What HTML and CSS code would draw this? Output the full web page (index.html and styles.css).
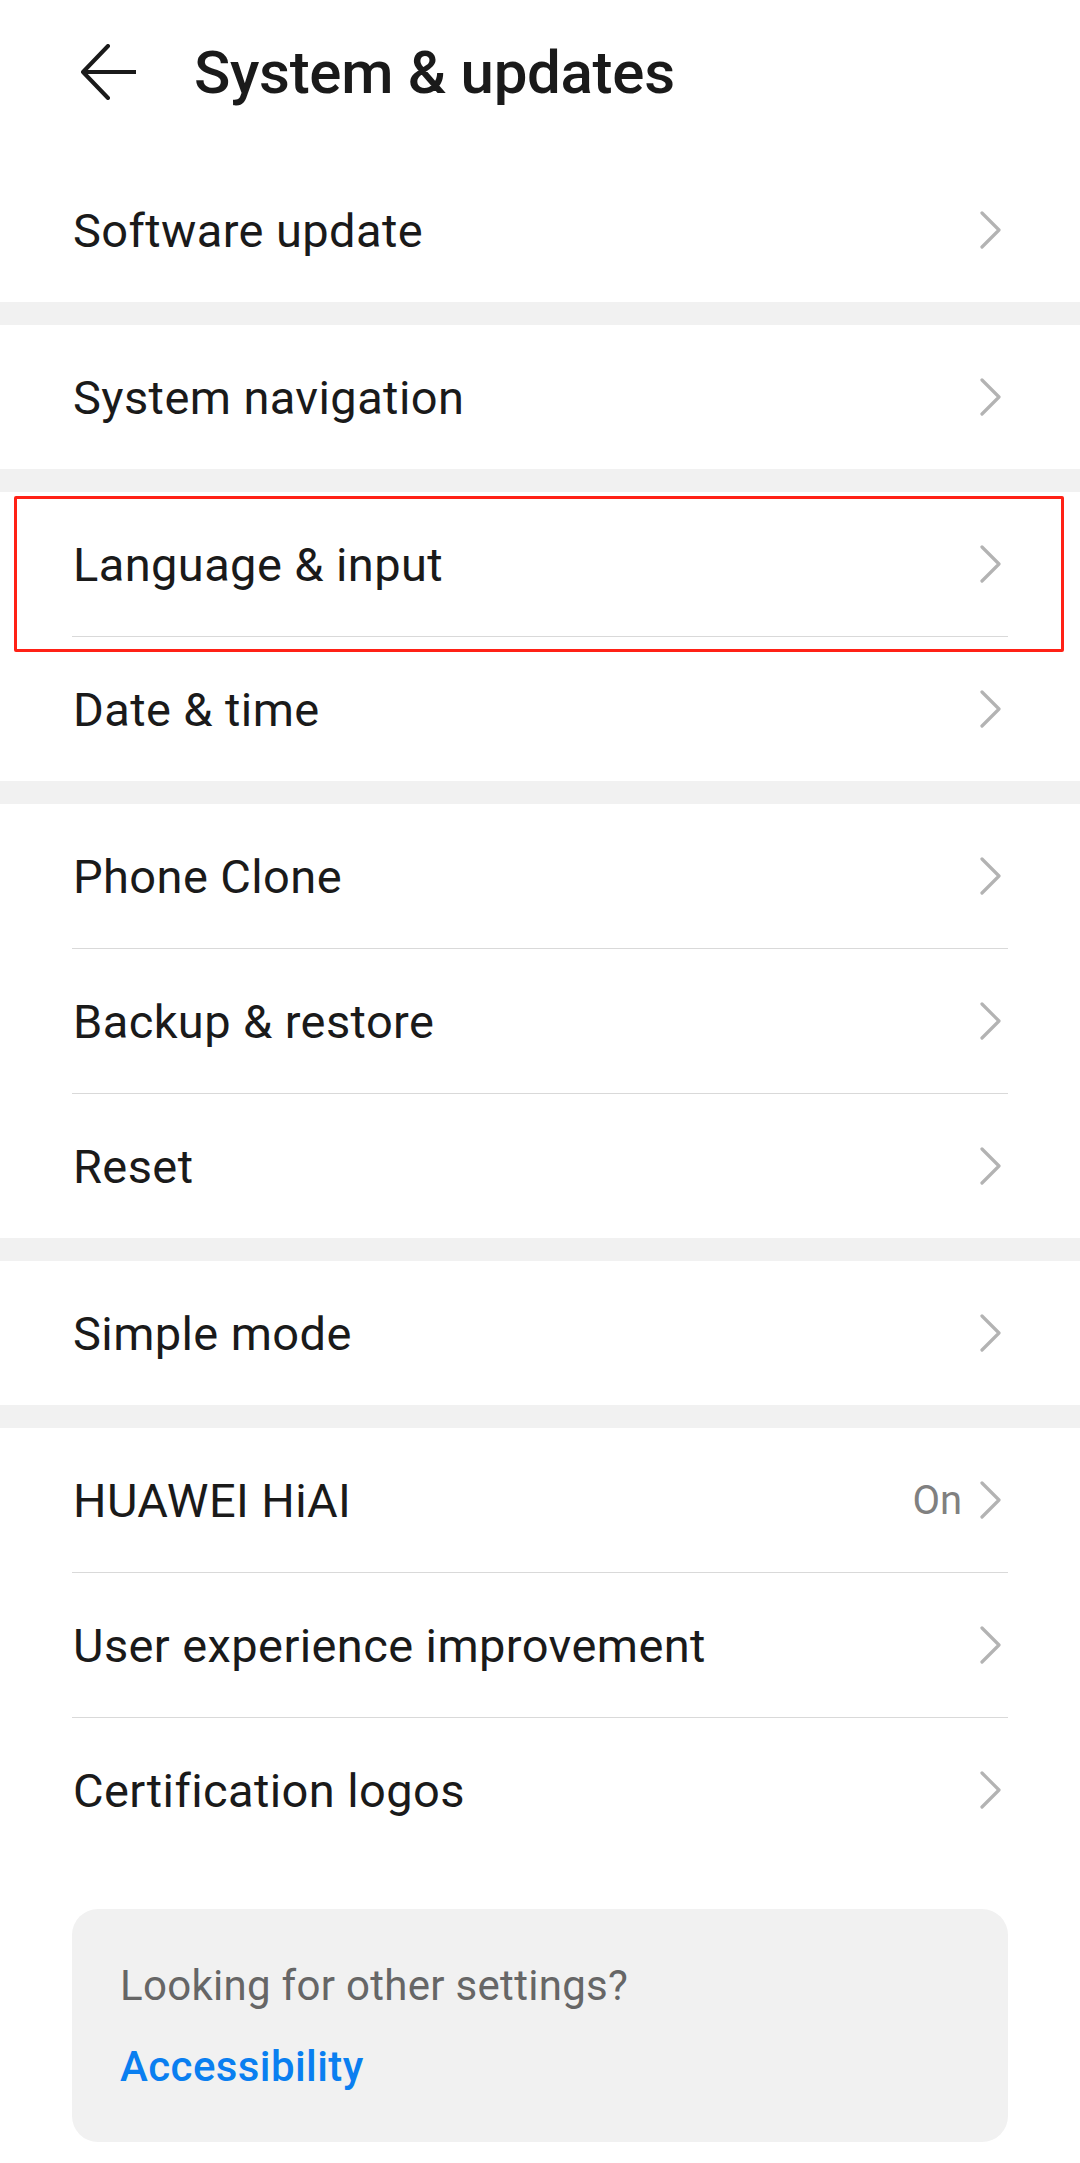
FILE: index.html
```html
<!DOCTYPE html>
<html lang="en">
<head>
  <meta charset="UTF-8" />
  <title>System &amp; updates</title>
  <link rel="stylesheet" href="styles.css">
</head>
<body>
  <div class="header">
    <svg class="back" width="56" height="56" viewBox="0 0 56 56">
      <path d="M28 2 L3 28 L28 54 M3 28 H56" fill="none" stroke="#1a1a1a" stroke-width="4" stroke-linecap="round" stroke-linejoin="round"/>
    </svg>
    <h1>System &amp; updates</h1>
  </div>

  <div class="group">
    <div class="row"><span class="label">Software update</span><span class="chev"></span></div>
  </div>
  <div class="gap"></div>

  <div class="group">
    <div class="row"><span class="label">System navigation</span><span class="chev"></span></div>
  </div>
  <div class="gap"></div>

  <div class="group marked">
    <div class="row"><span class="label">Language &amp; input</span><span class="chev"></span></div>
    <div class="divider"></div>
    <div class="row"><span class="label">Date &amp; time</span><span class="chev"></span></div>
    <div class="highlight"></div>
  </div>
  <div class="gap"></div>

  <div class="group">
    <div class="row"><span class="label">Phone Clone</span><span class="chev"></span></div>
    <div class="divider"></div>
    <div class="row"><span class="label">Backup &amp; restore</span><span class="chev"></span></div>
    <div class="divider"></div>
    <div class="row"><span class="label">Reset</span><span class="chev"></span></div>
  </div>
  <div class="gap"></div>

  <div class="group">
    <div class="row"><span class="label">Simple mode</span><span class="chev"></span></div>
  </div>
  <div class="gap"></div>

  <div class="group">
    <div class="row"><span class="label">HUAWEI HiAI</span><span class="value">On</span><span class="chev"></span></div>
    <div class="divider"></div>
    <div class="row"><span class="label">User experience improvement</span><span class="chev"></span></div>
    <div class="divider"></div>
    <div class="row"><span class="label">Certification logos</span><span class="chev"></span></div>
  </div>

  <div class="hint">
    <p class="hint-text">Looking for other settings?</p>
    <a class="hint-link" href="#">Accessibility</a>
  </div>

  <script>
    // same chevron icon for every row
    var chev = '<svg width="28" height="40" viewBox="0 0 28 40"><path d="M2 3 L19 20 L2 37" fill="none" stroke="#b3b3b3" stroke-width="3.2" stroke-linecap="round" stroke-linejoin="round"/></svg>';
    document.querySelectorAll('.chev').forEach(function (el) {
      el.innerHTML = chev;
    });
  </script>
</body>
</html>
```

FILE: styles.css
```css
body {
  margin: 0;
  background-color: #fff;
  font-family: Roboto, "Noto Sans", Arial, sans-serif;
  color: #1a1a1a;
}
.header {
  height: 158px;
  display: flex;
  align-items: center;
  padding-left: 80px;
  padding-bottom: 14px;
  box-sizing: border-box;
}
.back {
  flex: none;
}
.header h1 {
  margin: 0 0 0 58px;
  font-size: 60px;
  font-weight: 500;
  letter-spacing: -0.3px;
}
.group {
  background-color: #fff;
}
.gap {
  height: 23px;
  background-color: #f1f1f1;
}
.marked {
  position: relative;
}
.row {
  height: 144px;
  display: flex;
  align-items: center;
  padding: 0 72px;
}
.label {
  flex: 1;
  font-size: 47px;
  letter-spacing: 0.4px;
  margin-left: 1px;
}
.value {
  font-size: 40px;
  color: #808080;
  margin-right: 18px;
}
.chev {
  display: flex;
  width: 28px;
}
.divider {
  height: 1px;
  margin: 0 72px;
  background-color: #d9d9d9;
}
.highlight {
  position: absolute;
  left: 14px;
  right: 16px;
  top: 4px;
  height: 150px;
  border: 3px solid #ff2116;
  border-radius: 2px;
}
.hint {
  margin: 47px 72px 0;
  padding: 53px 48px 51px;
  background-color: #f1f1f1;
  border-radius: 26px;
}
.hint-text {
  margin: 0;
  font-size: 42px;
  line-height: 48px;
  letter-spacing: 0.3px;
  color: #666;
}
.hint-link {
  display: block;
  margin-top: 33px;
  font-size: 42px;
  line-height: 48px;
  letter-spacing: 0.4px;
  font-weight: 500;
  color: #0a7ff0;
  text-decoration: none;
}
```
